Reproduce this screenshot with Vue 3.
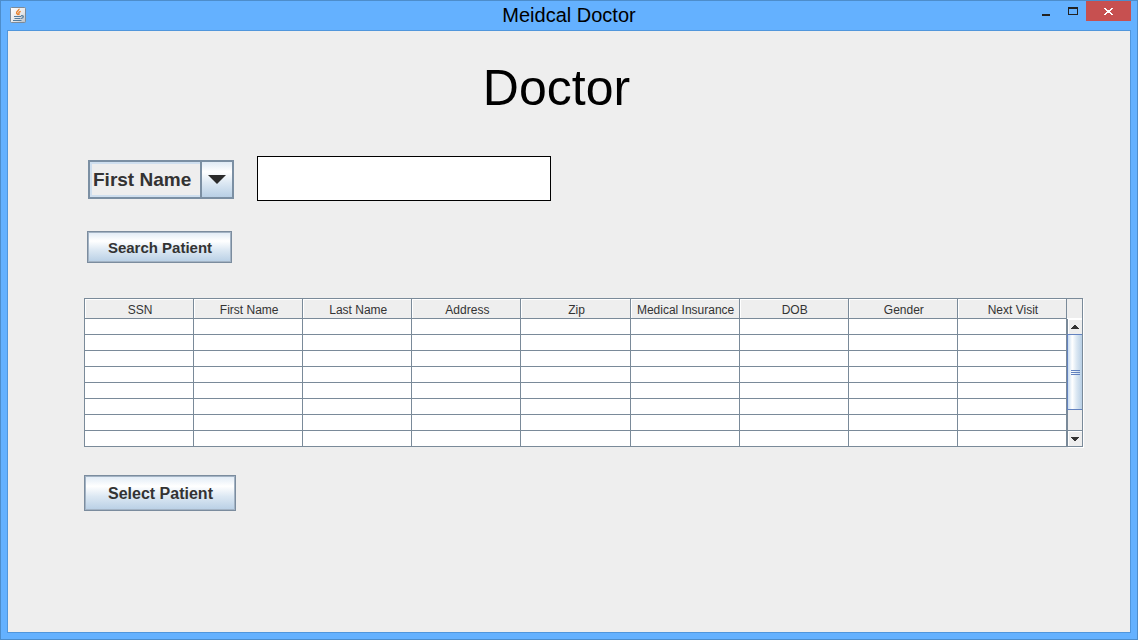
<script setup>
import { ref } from 'vue'

const columns = ['SSN', 'First Name', 'Last Name', 'Address', 'Zip', 'Medical Insurance', 'DOB', 'Gender', 'Next Visit']
const rowCount = 8
const field = ref('First Name')
const query = ref('')
</script>

<template>
  <div class="window">
    <header class="titlebar">
      <svg class="app-icon" width="16" height="16" viewBox="0 0 16 16" aria-hidden="true">
        <defs>
          <linearGradient id="iconShade" x1="0" y1="0" x2="1" y2="1">
            <stop offset="0" stop-color="#ffffff" />
            <stop offset="0.6" stop-color="#e4e6e8" />
            <stop offset="1" stop-color="#b4bcc4" />
          </linearGradient>
        </defs>
        <rect x="0.5" y="0.5" width="15" height="15" rx="1" fill="url(#iconShade)" stroke="#7d8a97" />
        <path d="M9 1.800c.6 1.600-2.900 2.300-2.400 4.200.2.800 1.200 1.200 1.500 2M10.700 4.300C8.900 5 8.400 5.600 9 6.600c.3.500 0 1-.4 1.400" fill="none" stroke="#e8822e" stroke-width="1.400" />
        <path d="M4 9.500h7M4.500 11.500h6M3 13.500h8.500M11 8.800c3-.6 3.200 2 0 2.700" fill="none" stroke="#547c9c" stroke-width="1.200" />
      </svg>
      <div class="title">Meidcal Doctor</div>
      <div class="controls">
        <button type="button" class="ctl min" aria-label="Minimize">
          <svg width="8" height="14" viewBox="0 0 8 14"><rect y="10" width="8" height="2" fill="#222" /></svg>
        </button>
        <button type="button" class="ctl max" aria-label="Maximize">
          <svg width="10" height="8" viewBox="0 0 10 8" shape-rendering="crispEdges"><path d="M0 0h10v8H0zM1 2v5h8V2z" fill="#222" fill-rule="evenodd" /></svg>
        </button>
        <button type="button" class="ctl close" aria-label="Close">
          <svg width="9" height="7" viewBox="0 0 8 7" preserveAspectRatio="none" shape-rendering="crispEdges"><path d="M0 0h2v1h1v1h2V1h1V0h2v1H7v1H6v1H5v1h1v1h1v1h1v1H6V6H5V5H3v1H2v1H0V6h1V5h1V4h1V3H2V2H1V1H0z" fill="#fff" /></svg>
        </button>
      </div>
    </header>

    <main class="content">
      <h1>Doctor</h1>

      <form class="search" @submit.prevent>
        <div class="search-row">
          <div class="combo">
            <select v-model="field" aria-label="Search field">
              <option v-for="c in columns" :key="c">{{ c }}</option>
            </select>
            <span class="combo-arrow">
              <svg width="18" height="9" viewBox="0 0 18 9"><path d="M0 0h18L9 9z" fill="#2b2b2b" /></svg>
            </span>
          </div>
          <input v-model="query" class="query" type="text" aria-label="Search text" />
        </div>
        <button type="submit" class="metal search-btn">Search Patient</button>
      </form>

      <div class="grid">
        <div class="table-area">
          <table>
            <thead>
              <tr><th v-for="c in columns" :key="c" scope="col">{{ c }}</th></tr>
            </thead>
            <tbody>
              <tr v-for="r in rowCount" :key="r"><td v-for="c in columns" :key="c"></td></tr>
            </tbody>
          </table>
        </div>
        <div class="side">
          <div class="corner"></div>
          <button type="button" class="arrow up" aria-label="Scroll up">
            <svg width="8" height="4" viewBox="0 0 8 4" shape-rendering="crispEdges"><path d="M3 0h2v1h1v1h1v1h1v1H0V3h1V2h1V1h1z" fill="#333" /></svg>
          </button>
          <div class="track">
            <div class="thumb"><i></i><i></i><i></i></div>
          </div>
          <button type="button" class="arrow down" aria-label="Scroll down">
            <svg width="8" height="4" viewBox="0 0 8 4" shape-rendering="crispEdges"><path d="M0 0h8v1H7v1H6v1H5v1H3V3H2V2H1V1H0z" fill="#333" /></svg>
          </button>
        </div>
      </div>

      <button type="button" class="metal select-btn">Select Patient</button>
    </main>
  </div>
</template>

<style>
body {
  background: #64b1ff;
}
</style>

<style scoped>
* {
  box-sizing: border-box;
}
.window {
  display: flex;
  flex-direction: column;
  min-height: 100vh;
  padding: 0 6px 6px;
  border: 1px solid #4d8dcb;
  background: #64b1ff;
  font-family: "Liberation Sans", Arial, sans-serif;
}
button {
  padding: 0;
  border: 0;
  background: none;
  font-family: inherit;
}
svg {
  display: block;
}
.titlebar {
  display: grid;
  grid-template-columns: 1fr auto 1fr;
  height: 29px;
}
.app-icon {
  margin: 6px 0 0 3px;
}
.title {
  font-size: 20px;
  line-height: 28px;
  color: #000;
}
.controls {
  display: flex;
  justify-content: flex-end;
  align-items: flex-start;
}
.ctl {
  display: flex;
  align-items: center;
  justify-content: center;
  height: 20px;
  width: 27px;
}
.ctl.close {
  width: 45px;
  padding-top: 1px;
  background: #c75050;
}
.content {
  flex: 1;
  padding: 29px 47px 40px 76px;
  border: 1px solid #5096dc;
  background: #eee;
}
h1 {
  margin: 0 54px 0 0;
  font-size: 50px;
  font-weight: 400;
  line-height: 56px;
  text-align: center;
  color: #000;
}
.search {
  margin: 40px 0 0 3px;
}
.search-row {
  display: flex;
  align-items: center;
  gap: 23px;
}
.combo {
  position: relative;
  width: 146px;
  height: 39px;
  margin: 4px 0 2px 1px;
}
.combo select {
  width: 100%;
  height: 100%;
  padding: 0 36px 0 3px;
  appearance: none;
  border: 2px solid #7b8fa3;
  border-radius: 0;
  box-shadow: inset 0 0 0 2px #cfdfef;
  background: #eee;
  font-family: inherit;
  font-size: 19px;
  font-weight: 700;
  color: #333;
}
.combo-arrow {
  position: absolute;
  top: 0;
  right: 0;
  bottom: 0;
  display: flex;
  align-items: center;
  justify-content: center;
  width: 34px;
  border: 2px solid #7b8fa3;
  background: linear-gradient(#dfeaf5, #fff 28%, #dce8f3 60%, #b8cfe5);
  pointer-events: none;
}
.query {
  width: 294px;
  height: 45px;
  padding: 0 8px;
  border: 1px solid #000;
  background: #fff;
  font-family: inherit;
  font-size: 20px;
}
.metal {
  display: block;
  border: 1px solid #7b8c9e;
  box-shadow: inset 0 0 0 1px #a3b3c4;
  background: linear-gradient(#dfeaf5, #fff 30%, #dce8f3 60%, #b8cfe5);
  font-weight: 700;
  color: #333;
}
.search-btn {
  width: 145px;
  height: 32px;
  margin-top: 30px;
  padding-left: 1px;
  font-size: 15px;
}
.select-btn {
  width: 152px;
  height: 36px;
  margin-top: 28px;
  padding: 2px 0 0 1px;
  font-size: 16px;
}
.grid {
  display: flex;
  margin-top: 35px;
}
.table-area {
  flex: 1;
  min-width: 0;
}
table {
  width: 100%;
  table-layout: fixed;
  border-spacing: 0;
  border-top: 1px solid #7a8a99;
  border-left: 1px solid #7a8a99;
  background: #fff;
}
th,
td {
  padding: 0;
  border-right: 1px solid #7a8a99;
  border-bottom: 1px solid #7a8a99;
}
th {
  height: 20px;
  padding: 3px 0 0 2px;
  background: #eee;
  box-shadow: inset 1px 1px #fff;
  font-size: 12px;
  font-weight: 400;
  line-height: 16px;
  white-space: nowrap;
  color: #333;
}
td {
  height: 16px;
}
.side {
  display: flex;
  flex-direction: column;
  width: 16px;
  border-right: 1px solid #7a8a99;
  border-bottom: 1px solid #7a8a99;
  background: #eee;
  box-shadow: 1px 1px #fff;
}
.corner {
  height: 21px;
  border-top: 1px solid #7a8a99;
  border-bottom: 1px solid #fff;
}
.arrow {
  display: flex;
  align-items: center;
  justify-content: center;
  height: 15px;
  border-left: 1px solid #7a8a99;
  box-shadow: inset 1px 1px #fff;
}
.arrow.down {
  height: 16px;
  border-top: 1px solid #7a8a99;
}
.track {
  flex: 1;
  border-left: 1px solid #7a8a99;
}
.thumb {
  display: flex;
  flex-direction: column;
  align-items: center;
  justify-content: center;
  gap: 1px;
  height: 76px;
  margin-left: -1px;
  border: 1px solid #6382bf;
  border-right: 0;
  background: linear-gradient(90deg, #c8dcf0, #fff 30%, #dce8f3 60%, #b8cfe5);
}
.thumb i {
  width: 9px;
  height: 1px;
  background: #6382bf;
}
</style>
